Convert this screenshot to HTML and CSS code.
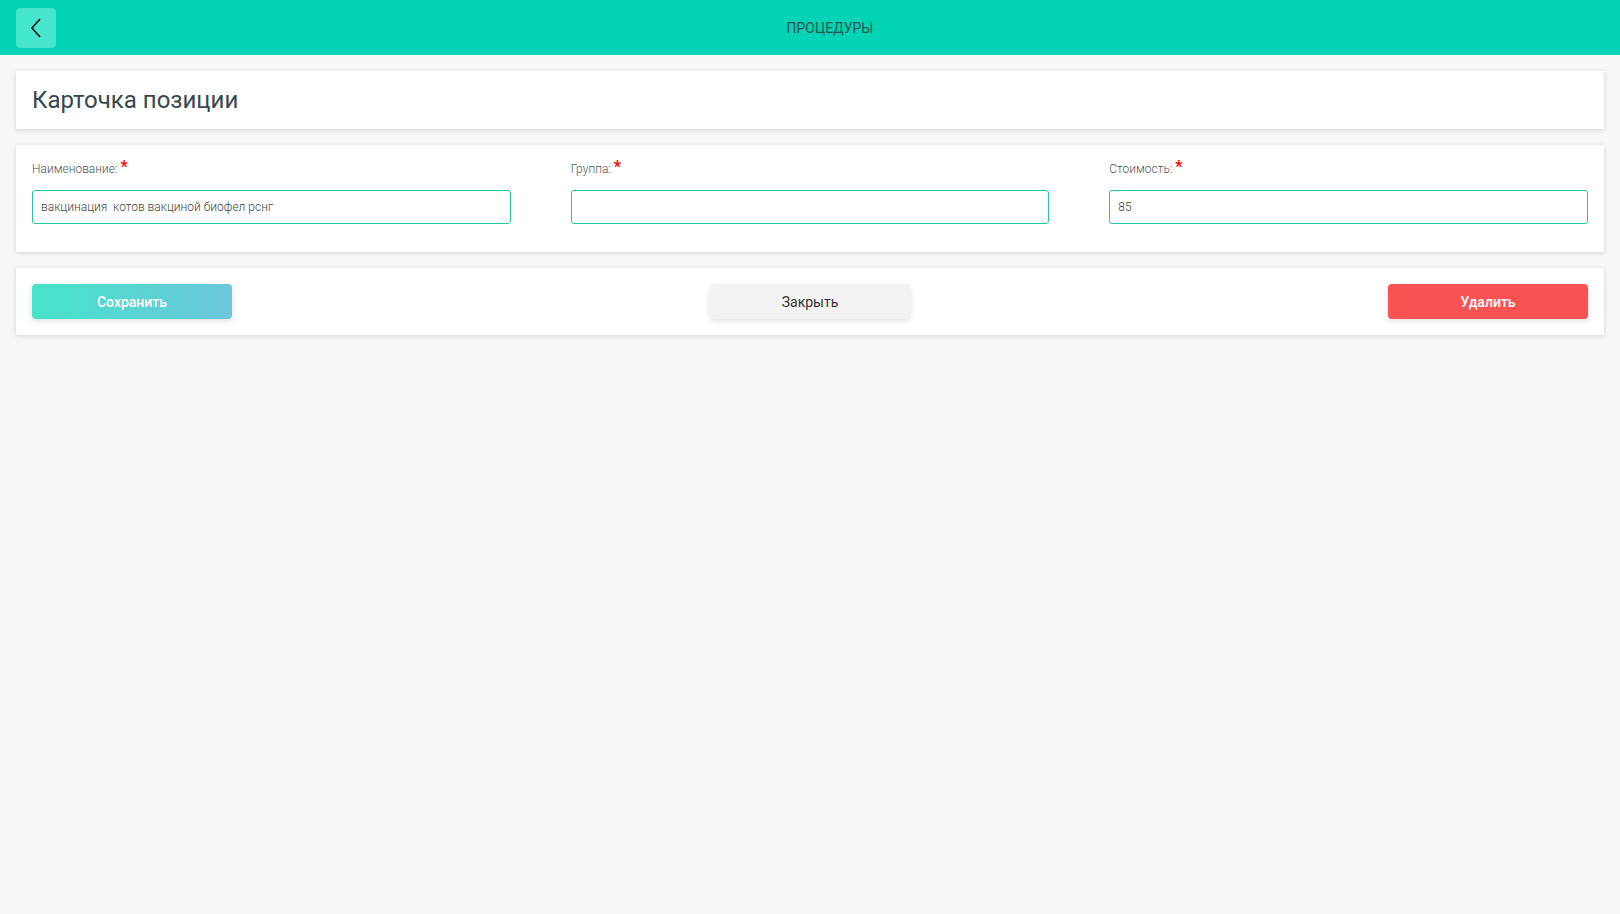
FILE: index.html
```html
<!DOCTYPE html>
<html>
<head>
    <title>Процедуры</title>
    <link rel="stylesheet" href="styles.css">
</head>
<body>
    <header class="topbar">
        <button class="back-btn" type="button">
            <svg width="14" height="22" viewBox="0 0 14 22">
                <path d="M11 2 L3 11 L11 20" fill="none" stroke="#111" stroke-width="1.6"/>
            </svg>
        </button>
        <div class="topbar-title">ПРОЦЕДУРЫ</div>
    </header>

    <main class="page">
        <section class="card title-card">
            <h1>Карточка позиции</h1>
        </section>

        <section class="card form-card">
            <div class="field">
                <label>Наименование: <span class="req">*</span></label>
                <input type="text" value="вакцинация  котов вакциной биофел рснг">
            </div>
            <div class="field">
                <label>Группа: <span class="req">*</span></label>
                <input type="text" value="">
            </div>
            <div class="field">
                <label>Стоимость: <span class="req">*</span></label>
                <input type="text" value="85">
            </div>
        </section>

        <section class="card actions-card">
            <button class="btn btn-save" type="button">Сохранить</button>
            <button class="btn btn-close" type="button">Закрыть</button>
            <button class="btn btn-delete" type="button">Удалить</button>
        </section>
    </main>
</body>
</html>
```

FILE: styles.css
```css
body {
    margin: 0;
    background: #f7f7f7;
    font-family: Roboto, "Noto Sans", Arial, sans-serif;
    color: #333;
}
.topbar {
    display: flex;
    align-items: center;
    height: 55px;
    padding: 0 16px;
    background: #00d4b4;
    box-sizing: border-box;
}
.back-btn {
    display: flex;
    align-items: center;
    justify-content: center;
    width: 40px;
    height: 40px;
    padding: 0;
    border: none;
    border-radius: 4px;
    background: #46e7cc;
    cursor: pointer;
}
.topbar-title {
    flex-grow: 1;
    text-align: center;
    font-size: 14px;
    color: #2e5552;
}
.page {
    display: flex;
    flex-direction: column;
    gap: 16px;
    padding: 16px;
}
.card {
    background: #fff;
    box-shadow: 0 1px 5px rgba(0, 0, 0, 0.14);
}
.title-card {
    display: flex;
    align-items: center;
    height: 58px;
    padding: 0 16px;
}
.title-card h1 {
    margin: 0;
    font-size: 24px;
    font-weight: 400;
    color: #37474f;
}
.form-card {
    display: grid;
    grid-template-columns: repeat(3, 1fr);
    gap: 60px;
    padding: 14px 16px 28px;
}
.field label {
    display: block;
    height: 16px;
    line-height: 16px;
    margin-bottom: 15px;
    font-size: 12px;
    font-weight: 300;
    color: #555;
}
.req {
    color: #f00;
    font-size: 16px;
    font-weight: bold;
    vertical-align: 1px;
}
.field input {
    display: block;
    width: 100%;
    height: 34px;
    box-sizing: border-box;
    padding: 0 8px;
    border: 1px solid #1fc9a6;
    border-radius: 3px;
    font-family: inherit;
    font-size: 12px;
    font-weight: 300;
    color: #444;
    outline: none;
}
.actions-card {
    display: flex;
    justify-content: space-between;
    padding: 16px;
}
.btn {
    width: 200px;
    height: 35px;
    border: none;
    border-radius: 4px;
    font-family: inherit;
    font-size: 14px;
    cursor: pointer;
    box-shadow: 0 2px 6px rgba(0, 0, 0, 0.12);
}
.btn-save {
    background: linear-gradient(90deg, #45e4c9, #6dc6dc);
    color: #fff;
    font-weight: 500;
}
.btn-close {
    background: #f3f3f3;
    color: #333;
}
.btn-delete {
    background: #fa5252;
    color: #fff;
    font-weight: 500;
}
```
